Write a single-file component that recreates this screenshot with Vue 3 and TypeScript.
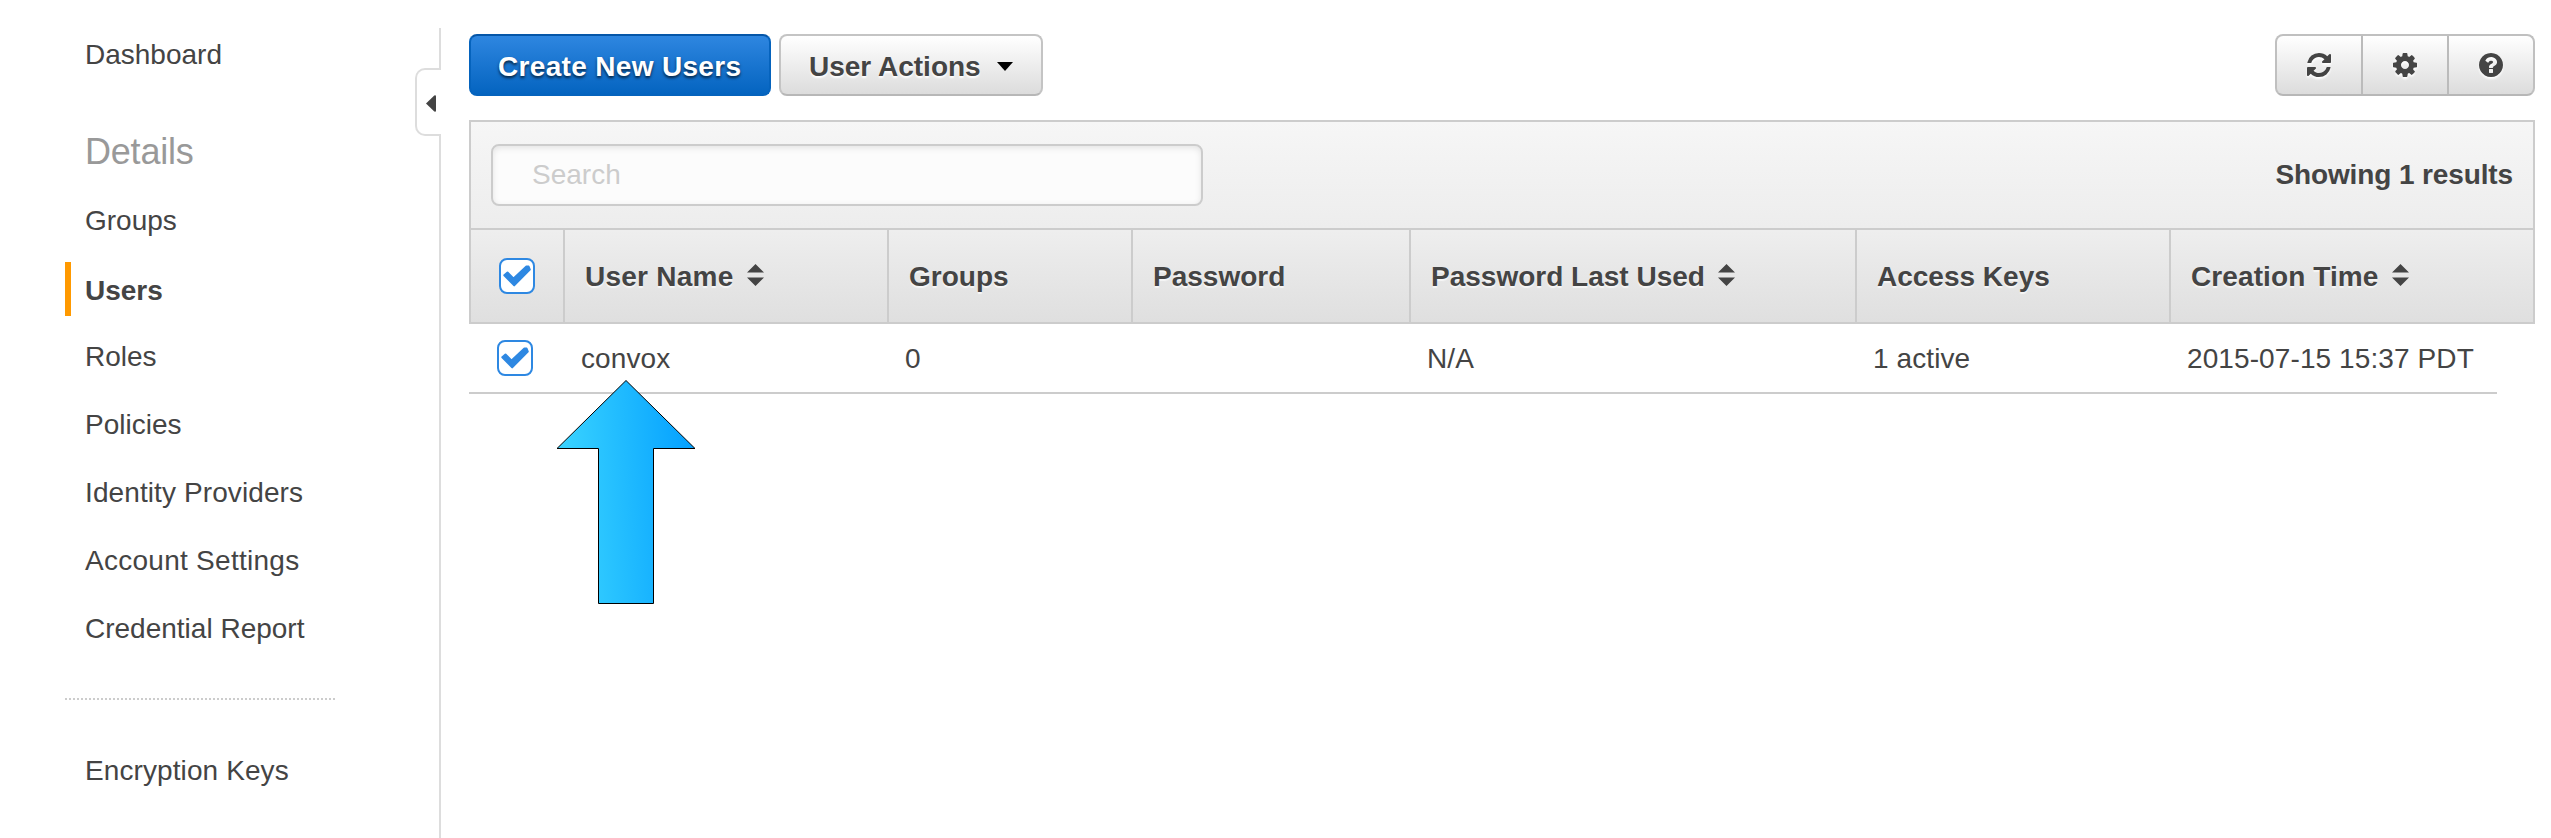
<script setup lang="ts">
import { ref } from 'vue'

interface NavItem {
  label: string
  kind?: string
}

interface Column {
  key: string
  label: string
  sortable: boolean
}

const details: NavItem[] = [
  { label: 'Groups' },
  { label: 'Users', kind: 'active' },
  { label: 'Roles' },
  { label: 'Policies' },
  { label: 'Identity Providers', kind: 'long' },
  { label: 'Account Settings', kind: 'wide' },
  { label: 'Credential Report' },
]

const columns: Column[] = [
  { key: 'name', label: 'User Name', sortable: true },
  { key: 'groups', label: 'Groups', sortable: false },
  { key: 'password', label: 'Password', sortable: false },
  { key: 'lastUsed', label: 'Password Last Used', sortable: true },
  { key: 'keys', label: 'Access Keys', sortable: false },
  { key: 'created', label: 'Creation Time', sortable: true },
]

const users: Record<string, string>[] = [
  { name: 'convox', groups: '0', password: '', lastUsed: 'N/A', keys: '1 active', created: '2015-07-15 15:37 PDT' },
]

const search = ref('')
const checkPath = 'M1.300 10.200 4.500 7.500 10.600 13.600 23.400 1.600 25.600 1.600 26.800 4.600 11.200 20.400Z'
</script>

<template>
  <div class="page">
    <nav class="sidebar">
      <a class="item first">Dashboard</a>
      <h2 class="heading">Details</h2>
      <a v-for="item in details" :key="item.label" class="item" :class="item.kind">{{ item.label }}</a>
      <div class="dotted"></div>
      <a class="item long">Encryption Keys</a>
    </nav>

    <div class="divider">
      <div class="line top"></div>
      <button class="collapse" aria-label="Collapse">
        <svg width="10" height="17" viewBox="0 0 10 17"><path d="M0 8.5 8.3 0.4Q10 0 10 1.2V15.8Q10 17 8.3 16.6Z" fill="#444" /></svg>
      </button>
      <div class="line rest"></div>
    </div>

    <main class="content">
      <div class="toolbar">
        <button class="btn primary"><span>Create New Users</span></button>
        <button class="btn menu">
          <span>User Actions</span>
          <svg class="caret" width="16" height="9" viewBox="0 0 16 9"><path d="M0 0H16L8 9Z" fill="#000" /></svg>
        </button>
        <div class="group">
          <button class="tool" aria-label="Refresh">
            <svg width="24" height="24" viewBox="0 0 1536 1536"><path fill="#444" d="M1511 928q0 5-1 7-64 268-268 434.500T764 1536q-146 0-282.500-55T238 1324l-129 129q-19 19-45 19t-45-19-19-45V960q0-26 19-45t45-19h448q26 0 45 19t19 45-19 45l-137 137q71 66 161 102t187 36q134 0 250-65t186-179q11-17 53-117 8-23 30-23h192q13 0 22.500 9.500t9.500 22.500zm25-800v448q0 26-19 45t-45 19h-448q-26 0-45-19t-19-45 19-45l138-138Q969 256 768 256q-134 0-250 65T332 500q-11 17-53 117-8 23-30 23H50q-13 0-22.500-9.500T18 608v-7q65-268 270-434.500T768 0q146 0 284 55.500T1297 212l130-129q19-19 45-19t45 19 19 45z" /></svg>
          </button>
          <button class="tool" aria-label="Settings">
            <svg width="24" height="24" viewBox="0 0 1536 1536"><path fill="#444" d="M1024 768q0-106-75-181t-181-75-181 75-75 181 75 181 181 75 181-75 75-181zm512-109v222q0 12-8 23t-20 13l-185 28q-19 54-39 91 35 50 107 138 10 12 10 25t-9 23q-27 37-99 108t-94 71q-12 0-26-9l-138-108q-44 23-91 38-16 136-29 186-7 28-36 28H657q-14 0-24.500-8.500T621 1506l-28-184q-49-16-90-37l-141 107q-10 9-25 9-14 0-25-11-126-114-165-168-7-10-7-23 0-12 8-23 15-21 51-66.500t54-70.500q-27-50-41-99L29 913q-13-2-21-12.500T0 877V655q0-12 8-23t19-13l186-28q14-46 39-92-40-57-107-138-10-12-10-24 0-10 9-23 26-36 98.500-107.500T337 135q13 0 26 10l138 107q44-23 91-38 16-136 29-186 7-28 36-28h222q14 0 24.500 8.500T915 30l28 184q49 16 90 37l142-107q9-9 24-9 13 0 25 10 129 119 165 170 7 8 7 22 0 12-8 23-15 21-51 66.500t-54 70.500q26 50 41 98l183 28q13 2 21 12.500t8 23.500z" /></svg>
          </button>
          <button class="tool" aria-label="Help">
            <svg width="24" height="24" viewBox="0 0 1536 1536"><path fill="#444" d="M896 1248v-192q0-14-9-23t-23-9H672q-14 0-23 9t-9 23v192q0 14 9 23t23 9h192q14 0 23-9t9-23zm256-672q0-88-55.500-163T958 297t-170-41q-243 0-371 213-15 24 8 42l132 100q7 6 19 6 16 0 25-12 53-68 86-92 34-24 86-24 48 0 85.500 26t37.500 59q0 38-20 61t-68 45q-63 28-115.500 86.500T640 892v36q0 14 9 23t23 9h192q14 0 23-9t9-23q0-19 21.500-49.500T972 829q32-18 49-28.500t46-35 44.500-48 28-60.500 12.500-81zm384 192q0 209-103 385.500T1153.500 1433 768 1536t-385.500-103T103 1153.500 0 768t103-385.500T382.500 103 768 0t385.500 103T1433 382.500 1536 768z" /></svg>
          </button>
        </div>
      </div>

      <section class="panel">
        <div class="filter">
          <input v-model="search" class="search" type="text" placeholder="Search" />
          <strong class="results">Showing 1 results</strong>
        </div>
        <div class="grid head">
          <div class="cell check">
            <span class="box"><svg width="28" height="22" viewBox="0 0 28 22"><path class="tick" :d="checkPath" /></svg></span>
          </div>
          <div v-for="col in columns" :key="col.key" class="cell">
            <span class="text" :class="'h-' + col.key">{{ col.label }}</span>
            <svg v-if="col.sortable" class="sort" width="17" height="22" viewBox="0 0 17 22"><path d="M8.500 0 17 8.500H0ZM0 13.500H17L8.500 22Z" fill="#444" /></svg>
          </div>
        </div>
      </section>

      <div v-for="user in users" :key="user.name" class="grid row">
        <div class="cell check">
          <span class="box"><svg width="28" height="22" viewBox="0 0 28 22"><path class="tick" :d="checkPath" /></svg></span>
        </div>
        <div v-for="col in columns" :key="col.key" class="cell">
          <span class="text">{{ user[col.key] }}</span>
        </div>
      </div>

      <svg class="pointer" width="142" height="228" viewBox="0 0 142 228">
        <defs>
          <linearGradient id="pointer-fill" gradientUnits="userSpaceOnUse" x1="8" y1="70" x2="134" y2="62">
            <stop offset="0" stop-color="#38d2ff" />
            <stop offset="1" stop-color="#06a2ff" />
          </linearGradient>
        </defs>
        <path d="M71 1.500 140 69.500H98.500V224.500H43.500V69.500H2Z" fill="url(#pointer-fill)" stroke="#000" stroke-width="1" />
      </svg>
    </main>
  </div>
</template>

<style>
body {
  background: #fff;
}
</style>

<style scoped>
.page {
  box-sizing: border-box;
  display: flex;
  width: 2551px;
  height: 838px;
  overflow: hidden;
  background: #fff;
  color: #444;
  font-family: "Liberation Sans", Arial, sans-serif;
  font-size: 28px;
  line-height: 32px;
}
.page * {
  box-sizing: border-box;
}
span, strong, a {
  white-space: nowrap;
}
button {
  margin: 0;
  padding: 0;
  font: inherit;
  color: inherit;
}
svg {
  display: block;
  flex: none;
}

.sidebar {
  display: flex;
  flex-direction: column;
  width: 415px;
  padding: 27px 0 0 65px;
}
.item {
  display: flex;
  align-items: center;
  width: 270px;
  height: 54px;
  margin-bottom: 14px;
  padding: 2px 0 0 20px;
}
.item.active {
  padding: 4px 0 0 14px;
  border-left: 6px solid #f90;
  font-weight: bold;
  margin: 1px 0 13px;
}
.item.first {
  margin-bottom: 0;
}
.item.long {
  letter-spacing: 0.1px;
}
.item.wide {
  letter-spacing: 0.27px;
}
.heading {
  margin: 50px 0 20px 20px;
  color: #999;
  font-size: 36px;
  line-height: 42px;
  font-weight: normal;
  letter-spacing: -0.2px;
}
.dotted {
  height: 2px;
  width: 270px;
  margin: 29px 0 43px;
  background: repeating-linear-gradient(90deg, #ccc 0 2px, transparent 2px 4px);
}

.divider {
  display: flex;
  flex-direction: column;
  align-items: flex-end;
  width: 26px;
  padding-top: 28px;
}
.line {
  width: 2px;
  background: #ddd;
}
.line.top {
  height: 40px;
}
.line.rest {
  flex: 1;
}
.collapse {
  display: flex;
  align-items: center;
  justify-content: flex-end;
  width: 26px;
  height: 68px;
  padding: 2px 5px 0 0;
  border: 2px solid #ddd;
  border-right: 0;
  border-radius: 10px 0 0 10px;
  background: #fff;
}

.content {
  position: relative;
  width: 2066px;
  margin-left: 28px;
  padding-top: 34px;
}
.toolbar {
  display: flex;
  gap: 8px;
  height: 62px;
  margin-bottom: 24px;
}
.btn {
  display: flex;
  align-items: center;
  height: 62px;
  border-radius: 8px;
  font-weight: bold;
}
.btn span {
  padding-top: 3px;
}
.primary {
  width: 302px;
  padding-left: 27px;
  border: 2px solid #0563bd;
  border-top-color: #0556a8;
  background: linear-gradient(#2e86e0, #0464c0);
  color: #fff;
  letter-spacing: 0.33px;
  text-shadow: 0 2px 3px rgba(0, 0, 0, 0.7);
}
.menu {
  width: 264px;
  padding-left: 28px;
  border: 2px solid #c4c4c4;
  border-bottom-color: #b7b7b7;
  background: linear-gradient(#fff, #dcdcdc);
  text-shadow: 0 2px 2px #fff;
}
.caret {
  margin: 2px 0 0 16px;
}
.group {
  display: flex;
  width: 260px;
  margin-left: auto;
  border: 2px solid #c0c0c0;
  border-bottom-color: #b7b7b7;
  border-radius: 8px;
  background: linear-gradient(#fff, #dcdcdc);
}
.tool {
  display: flex;
  align-items: center;
  justify-content: center;
  width: 84px;
  border: 0;
  background: none;
}
.tool + .tool {
  width: 86px;
  border-left: 2px solid #bbb;
}
.tool svg {
  filter: drop-shadow(0 2px 1px #fff);
}

.panel {
  height: 204px;
  border: 2px solid #ccc;
}
.filter {
  display: flex;
  align-items: center;
  justify-content: space-between;
  height: 106px;
  padding: 0 20px;
  background: linear-gradient(#f6f6f6, #ededed);
}
.search {
  width: 712px;
  height: 62px;
  margin: 0;
  padding: 0 0 0 39px;
  border: 2px solid #ccc;
  border-radius: 8px;
  background: #fcfcfc;
  box-shadow: inset 0 2px 6px rgba(0, 0, 0, 0.1);
  color: #444;
  font: inherit;
  outline: 0;
}
.search::placeholder {
  color: #ccc;
  opacity: 1;
}
.results {
  letter-spacing: -0.12px;
}
.grid {
  display: grid;
  grid-template-columns: 94px 324px 244px 278px 446px 314px 362px;
}
.head {
  height: 94px;
  border-top: 2px solid #ccc;
  background: linear-gradient(#eee, #dfdfdf);
  font-weight: bold;
  text-shadow: 0 2px 1px #f6f6f6;
}
.cell {
  display: flex;
  align-items: center;
  padding-left: 20px;
}
.text {
  padding-top: 2px;
}
.h-name {
  letter-spacing: 0.25px;
}
.h-created {
  letter-spacing: 0.1px;
}
.head .cell {
  border-right: 2px solid #ccc;
}
.head .cell:last-child {
  border-right: 0;
}
.head .check {
  padding-left: 28px;
}
.sort {
  margin: 0 0 2px 13px;
}
.box {
  display: flex;
  align-items: center;
  justify-content: center;
  width: 36px;
  height: 36px;
  border: 2px solid #2e88e2;
  border-radius: 8px;
  background: #fff;
}
.tick {
  fill: #2e88e2;
  stroke: #2e88e2;
  stroke-width: 2px;
  stroke-linejoin: round;
}
.row {
  width: 2028px;
  height: 70px;
  border-bottom: 2px solid #ccc;
  letter-spacing: 0.1px;
}
.row .cell {
  padding: 0 0 0 18px;
}
.row .check {
  padding: 0 0 0 28px;
}

.pointer {
  position: absolute;
  left: 86px;
  top: 379px;
}
</style>
